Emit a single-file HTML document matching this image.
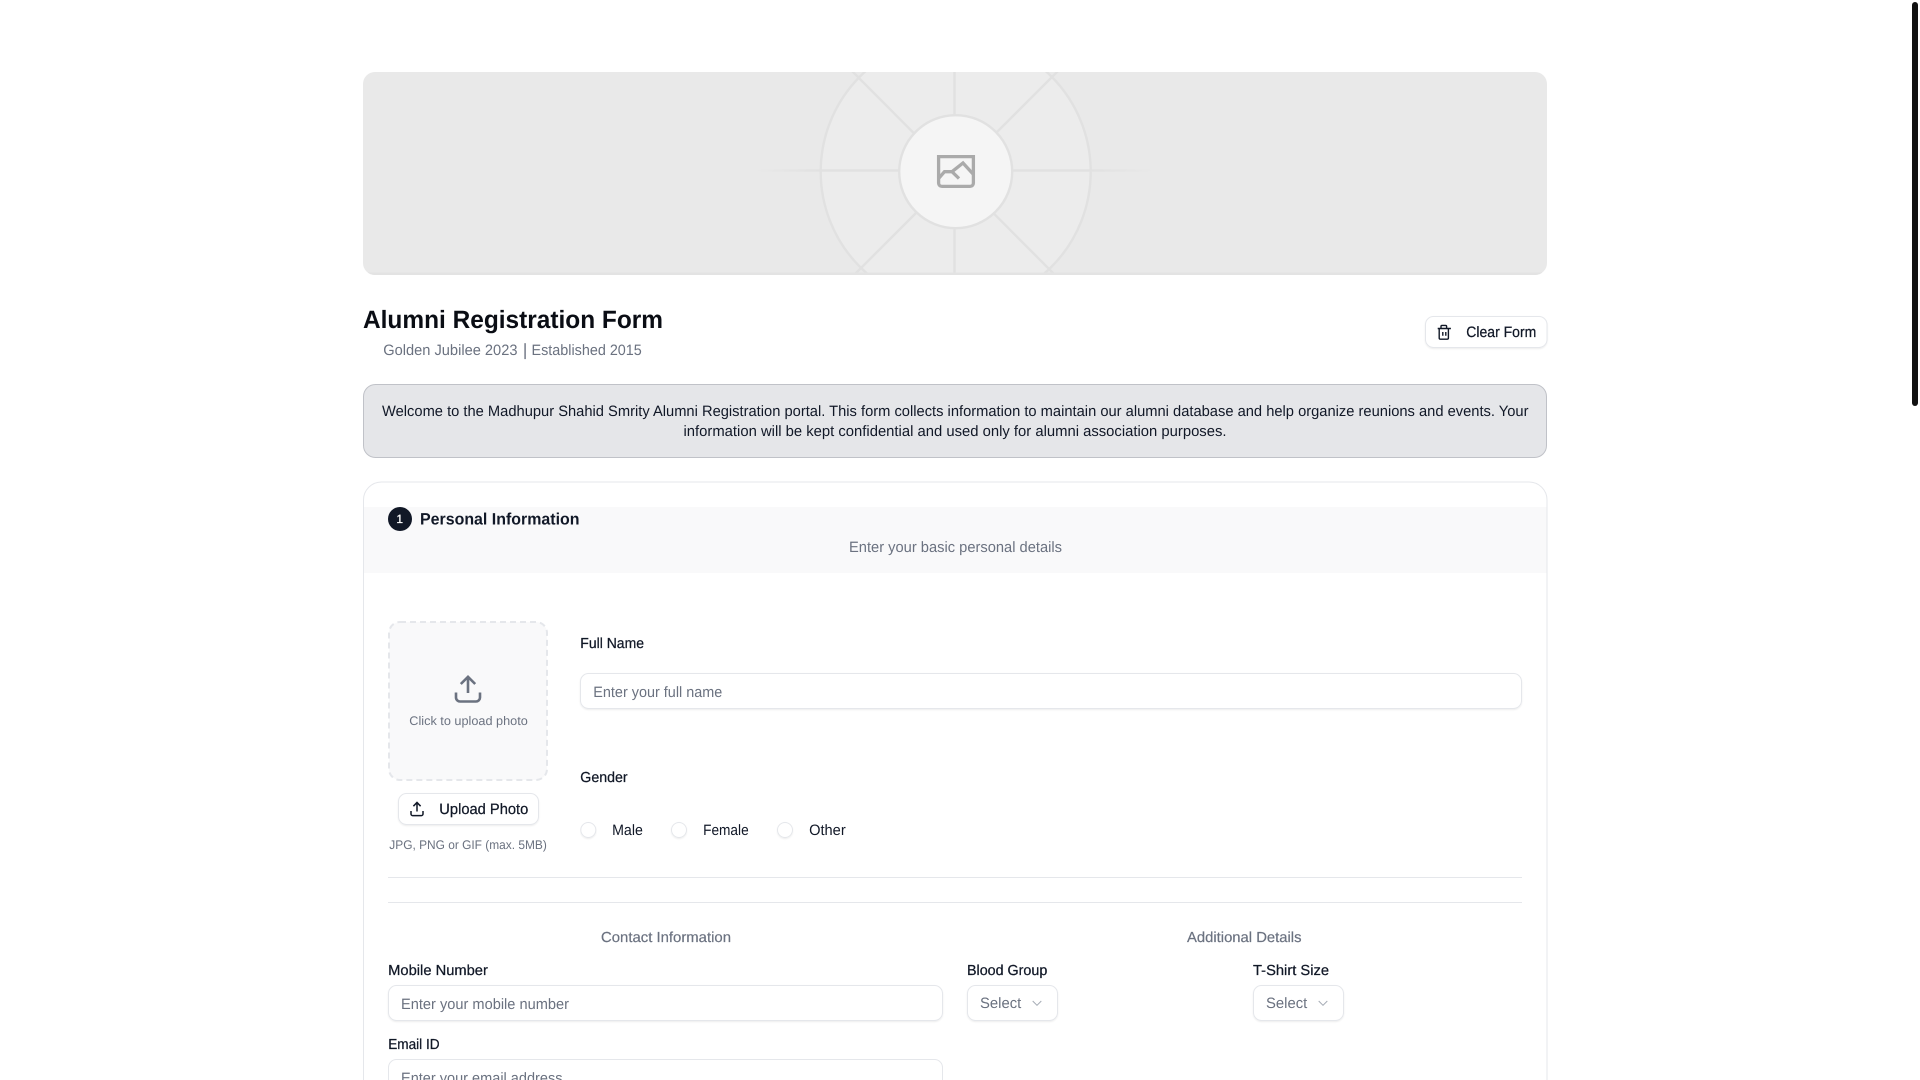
<!DOCTYPE html>
<html lang="en">
<head>
<meta charset="utf-8">
<title>Alumni Registration Form</title>
<style>
html,body{margin:0;padding:0;width:1920px;height:1080px;overflow:hidden;background:#fff}
svg{display:block;position:absolute;left:0;top:0}
text{font-family:"Liberation Sans",Arial,sans-serif;text-rendering:geometricPrecision;fill:#111827;font-size:15px}
.g{fill:#6b7280}
.m{stroke:#111827;stroke-width:.25px}
.gm{fill:#6b7280;stroke:#6b7280;stroke-width:.2px}
.s{font-size:12.5px;fill:#6b7280}
.b{font-weight:700}
</style>
</head>
<body>
<svg width="1920" height="1080" viewBox="0 0 1920 1080" xmlns="http://www.w3.org/2000/svg">
<defs>
<clipPath id="bc"><rect x="363" y="72" width="1184" height="203" rx="12"/></clipPath>
<linearGradient id="hg" gradientUnits="userSpaceOnUse" x1="755" y1="0" x2="1155" y2="0">
<stop offset="0" stop-color="#e1e1e1" stop-opacity="0"/>
<stop offset=".16" stop-color="#e1e1e1"/>
<stop offset=".84" stop-color="#e1e1e1"/>
<stop offset="1" stop-color="#e1e1e1" stop-opacity="0"/>
</linearGradient>
<filter id="sh" x="-5%" y="-20%" width="110%" height="150%"><feDropShadow dx="0" dy="1" stdDeviation=".8" flood-color="#000" flood-opacity=".07"/></filter>
</defs>

<!-- banner -->
<g clip-path="url(#bc)">
<rect x="363" y="72" width="1184" height="203" fill="#e9e9e9"/>
<circle cx="955.7" cy="171.7" r="135" fill="#ececec" stroke="#e1e1e1" stroke-width="2.4"/>
<rect x="755" y="169.3" width="400" height="2.4" fill="url(#hg)"/>
<path d="M954.5 60V280M843 62L1060 280M1067 62L849 280" stroke="#e1e1e1" stroke-width="2.4" fill="none"/>
<rect x="363" y="272.5" width="1184" height="2.5" fill="#e3e3e3"/>
</g>
<circle cx="955.7" cy="171.7" r="56.5" fill="#f5f5f5" stroke="#e1e1e1" stroke-width="2.4"/>
<path d="M938.6 156.6H973.4V183a3.4 3.4 0 0 1-3.4 3.4H942a3.4 3.4 0 0 1-3.4-3.4Z" fill="none" stroke="#aaa" stroke-width="3.3"/>
<path d="M939 178L944.5 171.7H952L963 163L973.5 174.5M952 171.7L959 178.5" fill="none" stroke="#aaa" stroke-width="3.3"/>

<!-- heading -->
<text class="b" x="363" y="328" style="font-size:25px;fill:#0a0d14" textLength="300" lengthAdjust="spacingAndGlyphs">Alumni Registration Form</text>
<text class="g" x="383.2" y="355" textLength="134.3" lengthAdjust="spacingAndGlyphs">Golden Jubilee 2023</text>
<text class="g" x="522.9" y="355.5" style="font-size:17px">|</text>
<text class="g" x="531.5" y="355" textLength="110.3" lengthAdjust="spacingAndGlyphs">Established 2015</text>

<!-- clear form -->
<rect x="1425.5" y="316.5" width="121.5" height="31" rx="8" fill="#fff" stroke="#e5e7eb" filter="url(#sh)"/>
<path d="M1437.7 328.5H1450.9M1441 328v-1.6a1 1 0 0 1 1-1h3.6a1 1 0 0 1 1 1V328M1439.2 328.5V338a1.2 1.2 0 0 0 1.2 1.2h6.8a1.2 1.2 0 0 0 1.2-1.2V328.5M1442.8 332v3.8M1445.8 332v3.8" fill="none" stroke="#111827" stroke-width="1.4"/>
<text class="m" x="1466.3" y="337.2" textLength="70" lengthAdjust="spacingAndGlyphs">Clear Form</text>

<!-- notice -->
<rect x="363.5" y="384.5" width="1183" height="73" rx="12" fill="#e5e6e9" stroke="#c0c2c8"/>
<text x="382" y="416" textLength="1146.5" lengthAdjust="spacingAndGlyphs">Welcome to the Madhupur Shahid Smrity Alumni Registration portal. This form collects information to maintain our alumni database and help organize reunions and events. Your</text>
<text x="683.5" y="436" textLength="543" lengthAdjust="spacingAndGlyphs">information will be kept confidential and used only for alumni association purposes.</text>

<!-- card -->
<path d="M363.5 1090V500a18 18 0 0 1 18-18H1529a18 18 0 0 1 18 18V1090" fill="#fff" stroke="#e5e7eb"/>
<rect x="364" y="507" width="1182.5" height="66" fill="#f9f9fa"/>
<circle cx="400" cy="519" r="12" fill="#111827"/>
<text x="399.7" y="523" text-anchor="middle" style="fill:#fff;stroke:#fff;stroke-width:.25px;font-size:12px">1</text>
<text class="b" x="420" y="524.6" style="font-size:16.5px" textLength="159.5" lengthAdjust="spacingAndGlyphs">Personal Information</text>
<text class="g" x="849" y="552" textLength="213" lengthAdjust="spacingAndGlyphs">Enter your basic personal details</text>

<!-- upload -->
<rect x="389" y="622" width="158" height="158" rx="11" fill="#f9f9fa" stroke="#e5e7eb" stroke-width="2" stroke-dasharray="6 4"/>
<path d="M468 677.5V693M460.8 684L468 676.8L475.2 684M456 692.5V697.5a4 4 0 0 0 4 4H476a4 4 0 0 0 4-4V692.5" fill="none" stroke="#6b7280" stroke-width="2.6"/>
<text class="s" x="409.3" y="725" textLength="118.5" lengthAdjust="spacingAndGlyphs">Click to upload photo</text>
<rect x="398.5" y="793.5" width="140" height="31" rx="8" fill="#fff" stroke="#e5e7eb" filter="url(#sh)"/>
<path d="M417 803V811.5M413.4 806.2L417 802.5L420.6 806.2M411 811V814a1.6 1.6 0 0 0 1.6 1.6H421.4a1.6 1.6 0 0 0 1.6-1.6V811" fill="none" stroke="#111827" stroke-width="1.5"/>
<text class="m" x="439.3" y="814" textLength="89" lengthAdjust="spacingAndGlyphs">Upload Photo</text>
<text class="s" x="389.3" y="849" textLength="157.5" lengthAdjust="spacingAndGlyphs">JPG, PNG or GIF (max. 5MB)</text>

<!-- full name -->
<text class="m" x="580.3" y="648" style="font-size:14.5px" textLength="63.7" lengthAdjust="spacingAndGlyphs">Full Name</text>
<rect x="580.5" y="673.5" width="941" height="35" rx="8" fill="#fff" stroke="#e5e7eb" filter="url(#sh)"/>
<text class="g" x="593.3" y="697" textLength="129" lengthAdjust="spacingAndGlyphs">Enter your full name</text>

<!-- gender -->
<text class="m" x="580.3" y="782" style="font-size:14.5px" textLength="47.3" lengthAdjust="spacingAndGlyphs">Gender</text>
<circle cx="588.3" cy="830" r="7.5" fill="#fff" stroke="#e5e7eb" filter="url(#sh)"/>
<circle cx="679" cy="830" r="7.5" fill="#fff" stroke="#e5e7eb" filter="url(#sh)"/>
<circle cx="785" cy="830" r="7.5" fill="#fff" stroke="#e5e7eb" filter="url(#sh)"/>
<text x="612.1" y="835" textLength="30.8" lengthAdjust="spacingAndGlyphs">Male</text>
<text x="703.1" y="835" textLength="45.6" lengthAdjust="spacingAndGlyphs">Female</text>
<text x="809.1" y="835" textLength="36.6" lengthAdjust="spacingAndGlyphs">Other</text>

<rect x="388" y="877" width="1134" height="1" fill="#e5e7eb"/>
<rect x="388" y="902" width="1134" height="1" fill="#e5e7eb"/>

<!-- contact -->
<text class="gm" x="601" y="942" style="font-size:14.5px" textLength="130" lengthAdjust="spacingAndGlyphs">Contact Information</text>
<text class="gm" x="1187" y="942" style="font-size:14.5px" textLength="114.5" lengthAdjust="spacingAndGlyphs">Additional Details</text>

<text class="m" x="388.2" y="975" style="font-size:14.5px" textLength="99.7" lengthAdjust="spacingAndGlyphs">Mobile Number</text>
<rect x="388.5" y="985.5" width="554" height="35" rx="8" fill="#fff" stroke="#e5e7eb" filter="url(#sh)"/>
<text class="g" x="401" y="1009" textLength="168" lengthAdjust="spacingAndGlyphs">Enter your mobile number</text>

<text class="m" x="388.2" y="1049" style="font-size:14.5px" textLength="51.4" lengthAdjust="spacingAndGlyphs">Email ID</text>
<rect x="388.5" y="1059.5" width="554" height="35" rx="8" fill="#fff" stroke="#e5e7eb"/>
<text class="g" x="401" y="1083" textLength="161.5" lengthAdjust="spacingAndGlyphs">Enter your email address</text>

<!-- selects -->
<text class="m" x="967" y="975" style="font-size:14.5px" textLength="80.3" lengthAdjust="spacingAndGlyphs">Blood Group</text>
<rect x="967.5" y="985.5" width="90" height="35" rx="8" fill="#fff" stroke="#e5e7eb" filter="url(#sh)"/>
<text class="g" x="980" y="1008" textLength="41.3" lengthAdjust="spacingAndGlyphs">Select</text>
<path d="M1032.7 1001L1037 1005.3L1041.3 1001" fill="none" stroke="#a5abb5" stroke-width="1"/>

<text class="m" x="1253" y="975" style="font-size:14.5px" textLength="76" lengthAdjust="spacingAndGlyphs">T-Shirt Size</text>
<rect x="1253.5" y="985.5" width="90" height="35" rx="8" fill="#fff" stroke="#e5e7eb" filter="url(#sh)"/>
<text class="g" x="1266" y="1008" textLength="41.3" lengthAdjust="spacingAndGlyphs">Select</text>
<path d="M1318.7 1001L1323 1005.3L1327.3 1001" fill="none" stroke="#a5abb5" stroke-width="1"/>

<!-- scrollbar thumb -->
<rect x="1912" y="2" width="6" height="404" rx="3" fill="#111"/>
</svg>
</body>
</html>
